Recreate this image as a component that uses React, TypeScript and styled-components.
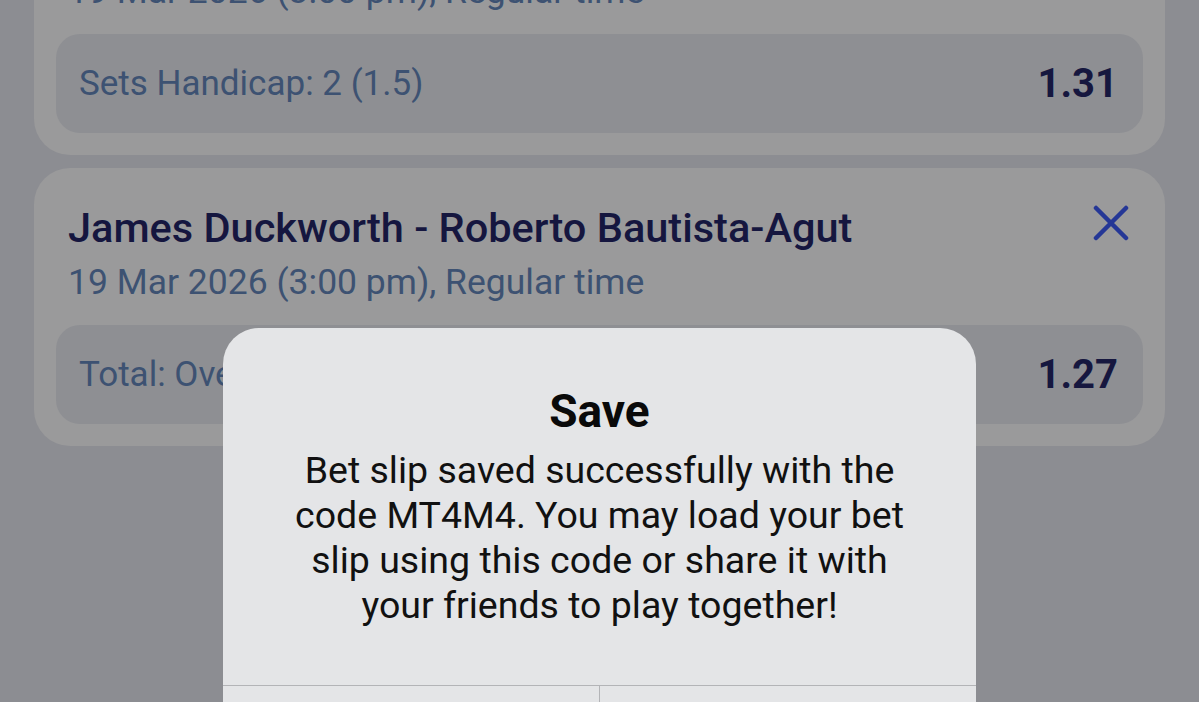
import React from "react";
import styled, { createGlobalStyle } from "styled-components";

const Global = createGlobalStyle`
  html, body { margin: 0; padding: 0; background: #8c8d92; }
  body { font-family: Roboto, "Noto Sans", "Liberation Sans", sans-serif; }
`;

const Page = styled.div`
  position: relative;
  width: 1199px;
  height: 702px;
  overflow: hidden;
  background: #8c8d92;
`;

const List = styled.div`
  display: flex;
  flex-direction: column;
  gap: 13px;
  padding: 0 34px;
  margin-top: -123px;
`;

const Card = styled.div`
  display: flex;
  flex-direction: column;
  background: #9a9a9b;
  border-radius: 36px;
  padding: 37px 22px 22px;
`;

const Header = styled.div`
  display: flex;
  justify-content: space-between;
  align-items: flex-start;
  padding: 0 12px;
`;

const Info = styled.div`
  display: flex;
  flex-direction: column;
  gap: 11px;
`;

const Title = styled.div`
  font-size: 41.5px;
  line-height: 46px;
  color: #15163f;
  font-weight: 500;
`;

const DateLine = styled.div`
  font-size: 35.5px;
  line-height: 40px;
  color: #3d5272;
`;

const Close = styled.div`
  width: 40px;
  height: 40px;
  margin-top: -2px;
  display: flex;
  align-items: center;
  justify-content: center;
`;

const Odds = styled.div`
  margin-top: 23px;
  display: flex;
  justify-content: space-between;
  align-items: center;
  height: 99px;
  padding: 0 25px 0 23px;
  border-radius: 24px;
  background: #8e8f93;
`;

const OddsLabel = styled.span`
  font-size: 35px;
  color: #3d5272;
`;

const OddsValue = styled.span`
  font-size: 40px;
  font-weight: 700;
  color: #16173f;
`;

const Alert = styled.div`
  position: absolute;
  left: 223px;
  top: 328px;
  width: 753px;
  height: 420px;
  background: #e4e5e7;
  border-radius: 36px;
  display: flex;
  flex-direction: column;
  font-family: Roboto, "Liberation Sans", sans-serif;
`;

const AlertBody = styled.div`
  display: flex;
  flex-direction: column;
  align-items: center;
  padding: 59px 20px 57px;
  text-align: center;
`;

const AlertTitle = styled.div`
  font-size: 46px;
  line-height: 48px;
  font-weight: 700;
  color: #0a0a0a;
  margin-bottom: 13px;
`;

const AlertText = styled.div`
  font-size: 37.5px;
  line-height: 45px;
  color: #111;
  white-space: nowrap;
`;

const Buttons = styled.div`
  display: grid;
  grid-template-columns: 1fr 1fr;
  border-top: 1.5px solid #b3b4b7;
  flex: 1;
`;

const Btn = styled.div<{ $divider?: boolean }>`
  border-right: ${(p) => (p.$divider ? "1.5px solid #b3b4b7" : "none")};
`;

const CloseIcon = () => (
  <svg width="36" height="36" viewBox="0 0 36 36">
    <path
      d="M3 3 L33 33 M33 3 L3 33"
      stroke="#253796"
      strokeWidth="4.5"
      strokeLinecap="round"
    />
  </svg>
);

const bets = [
  { title: "James Duckworth - Roberto Bautista-Agut", market: "Sets Handicap: 2 (1.5)", odds: "1.31" },
  { title: "James Duckworth - Roberto Bautista-Agut", market: "Total: Over (35.5)", odds: "1.27" },
];

export default function App() {
  return (
    <Page>
      <Global />
      <List>
        {bets.map((b, i) => (
          <Card key={i}>
            <Header>
              <Info>
                <Title>{b.title}</Title>
                <DateLine>19 Mar 2026 (3:00 pm), Regular time</DateLine>
              </Info>
              <Close>
                <CloseIcon />
              </Close>
            </Header>
            <Odds>
              <OddsLabel>{b.market}</OddsLabel>
              <OddsValue>{b.odds}</OddsValue>
            </Odds>
          </Card>
        ))}
      </List>
      <Alert>
        <AlertBody>
          <AlertTitle>Save</AlertTitle>
          <AlertText>
            Bet slip saved successfully with the
            <br />
            code MT4M4. You may load your bet
            <br />
            slip using this code or share it with
            <br />
            your friends to play together!
          </AlertText>
        </AlertBody>
        <Buttons>
          <Btn $divider />
          <Btn />
        </Buttons>
      </Alert>
    </Page>
  );
}
